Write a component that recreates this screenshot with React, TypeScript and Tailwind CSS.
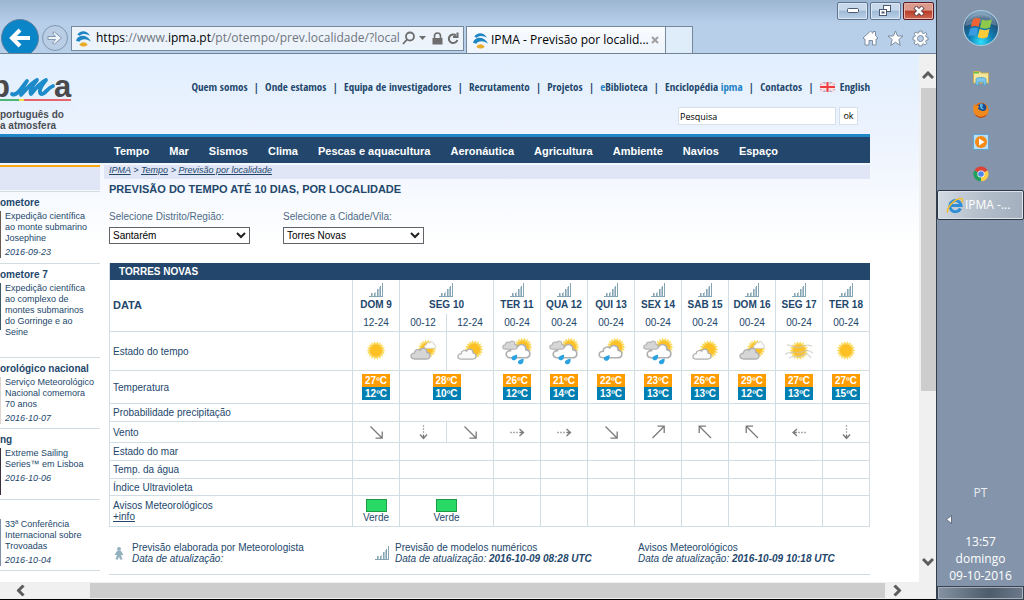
import React from 'react';

const spikes = (cx: number, cy: number, r: number) => {
  const pts: string[] = [];
  for (let i = 0; i < 36; i++) {
    const a = (i * Math.PI) / 18;
    const rad = i % 2 ? r * 0.76 : r;
    pts.push(`${(cx + Math.cos(a) * rad).toFixed(2)},${(cy + Math.sin(a) * rad).toFixed(2)}`);
  }
  return pts.join(' ');
};

function Sun({ cx, cy, r = 9.5 }: { cx: number; cy: number; r?: number }) {
  return (
    <g>
      <polygon points={spikes(cx, cy, r)} fill="#fadb62" />
      <circle cx={cx} cy={cy} r={r * 0.6} fill="#fec124" stroke="#f7b52a" strokeWidth="0.6" />
    </g>
  );
}

function Cloud({ x, y, w, h, fill, stroke = '#b0b0b0' }: { x: number; y: number; w: number; h: number; fill: string; stroke?: string }) {
  return (
    <svg x={x} y={y} width={w} height={h} viewBox="0 0 20 13" preserveAspectRatio="none">
      <path
        d="M4.5 12 C-0.2 12 -0.2 6.2 4.2 6.2 C4 2.8 8 1.8 9.4 3.4 C11.8 -0.4 16.6 1.4 16 5.4 C20.4 6.2 20 12 15.6 12 Z"
        fill={fill}
        stroke={stroke}
        strokeWidth="1.3"
      />
    </svg>
  );
}

function Drop({ x, y }: { x: number; y: number }) {
  return <path d={`M${x + 3} ${y - 3} C${x + 4} ${y + 3} ${x - 1} ${y + 4} ${x - 2.4} ${y + 1.6} C${x - 3.4} ${y - 1} ${x} ${y - 2} ${x + 3} ${y - 3} Z`} fill="#2aa2e0" />;
}

type Sky = 'sun' | 'graycloud' | 'cloud' | 'rain' | 'shower' | 'haze';

function SkyIcon({ kind }: { kind: Sky }) {
  return (
    <svg width="46" height="38" viewBox="0 0 46 38" className="mx-auto block" aria-hidden="true">
      {kind === 'sun' && <Sun cx={23} cy={18.5} />}
      {kind === 'haze' && (
        <g>
          <Sun cx={23} cy={18.5} />
          <path
            d="M11 13C16 13 19 17 25 15S32 13 36 14M9 22C16 18 21 22 26 20S33 18 37 21M13 26C17 23 22 26 27 23S33 24 35 26"
            fill="none"
            stroke="#c4c4be"
            strokeOpacity="0.6"
            strokeWidth="1.5"
          />
        </g>
      )}
      {kind === 'graycloud' && (
        <g>
          <Sun cx={27} cy={17} />
          <Cloud x={10} y={15} w={21} h={13} fill="#d6d6d6" />
          <Cloud x={24} y={9} w={12} h={8} fill="#ffffff" stroke="#c4c4c4" />
        </g>
      )}
      {kind === 'cloud' && (
        <g>
          <Sun cx={27} cy={17.5} />
          <Cloud x={10} y={16} w={20} h={12} fill="#fafafa" />
        </g>
      )}
      {kind === 'rain' && (
        <g>
          <Sun cx={29} cy={15} />
          <Cloud x={11} y={11} w={26} h={16} fill="#ffffff" />
          <Cloud x={8} y={8} w={16} h={10} fill="#d6d6d6" />
          <Drop x={20} y={25.5} />
          <Drop x={26.5} y={29.5} />
        </g>
      )}
      {kind === 'shower' && (
        <g>
          <Sun cx={28} cy={15} />
          <Cloud x={10} y={12} w={25} h={15} fill="#ffffff" />
          <Drop x={18.500} y={26} />
        </g>
      )}
    </svg>
  );
}

function SignalIcon() {
  return (
    <svg width="15" height="14" viewBox="0 0 15 14" className="mx-auto block" aria-hidden="true" shapeRendering="crispEdges">
      <path d="M0 13h14v1H0z M2 10h1v3H2z M5 10h1v3H5z M8 6h1v7H8z M11 3h1v10h-1z M13 0h1v13h-1z" fill="#86a5b4" />
      <path d="M3 10h1v3H3z M6 9h1v4H6z M9 6h1v7H9z M10 4h1v9h-1z" fill="#b9ccd5" />
    </svg>
  );
}

const windPaths: Record<string, React.ReactNode> = {
  se: <path d="M1.500 1.500L13 13M13.200 6.500V13.200H6.500" />,
  ne: <path d="M1.500 13L13 1.500M13.200 8V1.200H6.500" />,
  nw: <path d="M13 13L1.500 1.500M1.200 8V1.200H8" />,
  e: (
    <g>
      <path d="M0 7.500H10" strokeDasharray="2 1" strokeOpacity="0.6" />
      <path d="M9.500 4L13.500 7.500L9.500 11M10 7.500H13" />
    </g>
  ),
  w: (
    <g>
      <path d="M14 7.500H4" strokeDasharray="2 1" strokeOpacity="0.6" />
      <path d="M5 4L1 7.500L5 11M4.500 7.500H1.500" />
    </g>
  ),
  s: (
    <g>
      <path d="M7.500 0V10" strokeDasharray="2 1" strokeOpacity="0.6" />
      <path d="M4 9.500L7.500 13.500L11 9.500M7.500 10V13" />
    </g>
  ),
};

function Wind({ dir }: { dir: string }) {
  return (
    <svg width="15" height="15" viewBox="0 0 15 15" fill="none" stroke="#7a7a7a" strokeWidth="1.300" className="mx-auto block" aria-label={dir}>
      {windPaths[dir]}
    </svg>
  );
}

function IpmaIcon() {
  return (
    <svg width="17" height="17" viewBox="0 0 18 18" className="shrink-0" aria-hidden="true">
      <path d="M2.500 5C5 0.500 12 -0.500 16 6C12 4 8 3 5 6Z" fill="#1f86c4" />
      <path d="M1 11.500C3 4.500 13 4 17 12.500C13 9.500 8 8.500 4.500 12.500Z" fill="#1f86c4" />
      <path d="M4.500 15.500C7 12 11 12 13.500 15.500C11 18 7 18 4.500 15.500Z" fill="#e9ab2c" />
    </svg>
  );
}

const days: { name: string; span: number; hours: string[]; sky: Sky[]; max: number; min: number; wind: string[]; green?: boolean }[] = [
  { name: 'DOM 9', span: 1, hours: ['12-24'], sky: ['sun'], max: 27, min: 12, wind: ['se'], green: true },
  { name: 'SEG 10', span: 2, hours: ['00-12', '12-24'], sky: ['graycloud', 'cloud'], max: 28, min: 10, wind: ['s', 'se'], green: true },
  { name: 'TER 11', span: 1, hours: ['00-24'], sky: ['rain'], max: 26, min: 12, wind: ['e'] },
  { name: 'QUA 12', span: 1, hours: ['00-24'], sky: ['rain'], max: 21, min: 14, wind: ['e'] },
  { name: 'QUI 13', span: 1, hours: ['00-24'], sky: ['shower'], max: 22, min: 13, wind: ['se'] },
  { name: 'SEX 14', span: 1, hours: ['00-24'], sky: ['rain'], max: 23, min: 13, wind: ['ne'] },
  { name: 'SAB 15', span: 1, hours: ['00-24'], sky: ['cloud'], max: 26, min: 13, wind: ['nw'] },
  { name: 'DOM 16', span: 1, hours: ['00-24'], sky: ['graycloud'], max: 29, min: 12, wind: ['nw'] },
  { name: 'SEG 17', span: 1, hours: ['00-24'], sky: ['haze'], max: 27, min: 13, wind: ['w'] },
  { name: 'TER 18', span: 1, hours: ['00-24'], sky: ['sun'], max: 27, min: 15, wind: ['s'] },
];

const cell = 'border-r border-b border-[#d1dce3] p-0 text-center';
const label = 'border-r border-b border-[#d1dce3] p-0 pl-[3px] text-left font-normal';

function EmptyRow({ title, height }: { title: string; height: string }) {
  return (
    <tr className={height}>
      <th scope="row" className={label}>{title}</th>
      {days.map((d) => (
        <td key={d.name} colSpan={d.span} className={cell}></td>
      ))}
    </tr>
  );
}

function ForecastTable() {
  return (
    <table className="mt-[19px] w-full table-fixed border-separate border-spacing-0 border-l border-[#d1dce3] text-[10px] leading-[11px]">
      <colgroup>
        <col className="w-[243px]" />
        {Array.from({ length: 11 }, (_, i) => (
          <col key={i} />
        ))}
      </colgroup>
      <thead>
        <tr className="h-[17px] bg-[#23476c] text-white">
          <th colSpan={12} className="p-0 pl-[9px] text-left">TORRES NOVAS</th>
        </tr>
        <tr className="h-[34px]">
          <th rowSpan={2} className="border-r border-b border-[#d1dce3] p-0 pl-[3px] text-left text-[11px]">DATA</th>
          {days.map((d) => (
            <th key={d.name} colSpan={d.span} className="border-r border-[#d1dce3] p-0 pt-[3px] text-center align-top">
              <SignalIcon />
              <span className="mt-[2px] block whitespace-nowrap">{d.name}</span>
            </th>
          ))}
        </tr>
        <tr className="h-[18px]">
          {days.flatMap((d) => d.hours.map((h) => <td key={d.name + h} className={cell}>{h}</td>))}
        </tr>
      </thead>
      <tbody>
        <tr className="h-[39px]">
          <th scope="row" className={label}>Estado do tempo</th>
          {days.flatMap((d) => d.sky.map((s, i) => <td key={d.name + i} className={cell}><SkyIcon kind={s} /></td>))}
        </tr>
        <tr className="h-[33px]">
          <th scope="row" className={label}>Temperatura</th>
          {days.map((d) => (
            <td key={d.name} colSpan={d.span} className={cell}>
              <div className="mx-auto w-7 font-bold leading-[13px] text-white">
                <div className="bg-[#ff9c00]">{d.max}ºC</div>
                <div className="bg-[#007fb2]">{d.min}ºC</div>
              </div>
            </td>
          ))}
        </tr>
        <EmptyRow title="Probabilidade precipitação" height="h-[18px]" />
        <tr className="h-[21px]">
          <th scope="row" className={label}>Vento</th>
          {days.flatMap((d) => d.wind.map((w, i) => <td key={d.name + i} className={cell}><Wind dir={w} /></td>))}
        </tr>
        <EmptyRow title="Estado do mar" height="h-[18px]" />
        <EmptyRow title="Temp. da água" height="h-[18px]" />
        <EmptyRow title="Índice Ultravioleta" height="h-[17px]" />
        <tr className="h-[31px]">
          <th scope="row" className={label}>
            Avisos Meteorológicos
            <a href="#info" className="block underline">+info</a>
          </th>
          {days.map((d) => (
            <td key={d.name} colSpan={d.span} className={cell}>
              {d.green && (
                <div>
                  <div className="mx-auto h-[13px] w-[21px] border border-[#1d9a45] bg-[#29d965]"></div>
                  <div>Verde</div>
                </div>
              )}
            </td>
          ))}
        </tr>
      </tbody>
    </table>
  );
}

const news = [
  { title: 'ometore', body: 'Expedição científica ao monte submarino Josephine', date: '2016-09-23', height: 'min-h-[72px]', thumb: 'bg-[#6b5a50]' },
  { title: 'ometore 7', body: 'Expedição científica ao complexo de montes submarinos do Gorringe e ao Seine', date: '', height: 'min-h-[94px]', thumb: 'bg-[#3c5a62]' },
  { title: 'orológico nacional', body: 'Serviço Meteorológico Nacional comemora 70 anos', date: '2016-10-07', height: 'min-h-[71px]', thumb: 'bg-[#e0d6d0]' },
  { title: 'ng', body: 'Extreme Sailing Series™ em Lisboa', date: '2016-10-06', height: 'min-h-[71px]', thumb: 'bg-[#3a2f3c]' },
  { title: '', body: '33ª Conferência Internacional sobre Trovoadas', date: '2016-10-04', height: 'min-h-[71px]', thumb: 'bg-[#7f8fa8]' },
];

function Sidebar() {
  return (
    <aside className="mt-[2px] w-[100px] shrink-0 text-[9px] leading-[11px]">
      <div className="h-[25px] border-t-2 border-[#f7a813] bg-[#e0e6f6]"></div>
      <div className="border-b border-[#d1dce3] pt-px"></div>
      {news.map((n) => (
        <article key={n.date + n.title} className={`${n.height} border-b border-[#d1dce3] pt-1`}>
          <h2 className="h-[15px] whitespace-nowrap text-[10px] font-bold leading-[14px]">{n.title}</h2>
          <div className="flex gap-1">
            <div className={`h-[47px] w-px shrink-0 ${n.thumb}`}></div>
            <div className="max-w-[90px]">
              <p>{n.body}</p>
              <p className="mt-[3px] italic">{n.date}</p>
            </div>
          </div>
        </article>
      ))}
    </aside>
  );
}

function Logo() {
  return (
    <a href="#home" aria-label="ipma" className="block w-[74px] shrink-0 font-bold text-[#4b4f55]">
      <svg width="74" height="32" viewBox="0 0 74 32" className="block overflow-visible">
        <text x="-9" y="20" fontFamily="Liberation Sans" fontWeight="700" fontSize="31" fill="#4a4a4c">p</text>
        <path d="M0 22h74v10H0z" fill="#e7f1fe" />
        <path d="M12 17C17 20 21 11 27 4C23 10 20 15 21 18C25 14 30 7 37 3C32 9 29 14 31 17C35 12 40 6 46 3C41 9 38 15 41 17C45 18 47 11 53 9" fill="none" stroke="#1d8bc9" strokeWidth="3.800" strokeLinejoin="round" strokeLinecap="round" />
        <text x="54" y="20" fontFamily="Liberation Sans" fontWeight="700" fontSize="31" fill="#4a4a4c">a</text>
        <path d="M0 22h19v2H0z" fill="#4db57a" />
        <path d="M19 22h5v2h-5z" fill="#f0e04a" />
        <path d="M24 22h47v2H24z" fill="#e8656c" />
      </svg>
      <span className="block whitespace-nowrap text-[10px] leading-[11px]">português do</span>
      <span className="block whitespace-nowrap text-[10px] leading-[11px]">a atmosfera</span>
    </a>
  );
}

const topLinks: React.ReactNode[] = [
  'Quem somos', 'Onde estamos', 'Equipa de investigadores', 'Recrutamento', 'Projetos',
  <><span className="text-[#1b80c4]">e</span>Biblioteca</>,
  <>Enciclopédia <span className="text-[#1b80c4]">ipma</span></>,
  'Contactos',
];

const menu = ['Tempo', 'Mar', 'Sismos', 'Clima', 'Pescas e aquacultura', 'Aeronáutica', 'Agricultura', 'Ambiente', 'Navios', 'Espaço'];

function SelectField({ id, title, value }: { id: string; title: string; value: string }) {
  return (
    <div className="w-[141px]">
      <label htmlFor={id} className="block whitespace-nowrap text-[10px] leading-[13px] text-[#4f6a85]">{title}</label>
      <div className="relative mt-1">
        <select id={id} className="block h-[17px] w-full appearance-none border border-[#606468] bg-white pl-[3px] text-[10px] leading-[13px] text-black">
          <option>{value}</option>
        </select>
        <svg width="10" height="7" viewBox="0 0 10 7" className="pointer-events-none absolute right-1 top-[5px]" fill="none" stroke="#222" strokeWidth="2">
          <path d="M1 1L5 5L9 1" />
        </svg>
      </div>
    </div>
  );
}

function WebPage() {
  return (
    <div className="min-w-0 flex-1 bg-[linear-gradient(#e2effe,#ecf3fe_80px,#ffffff_190px)] bg-white pr-[49px] font-['Liberation_Sans',Arial,sans-serif] text-[#23476c]">
      <header className="flex h-[80px] justify-between">
        <div className="pt-[23px]"><Logo /></div>
        <div className="flex flex-col items-end pt-[25px]">
          <nav className="flex items-center whitespace-nowrap font-['Open_Sans_Condensed','Noto_Sans_Condensed','Liberation_Sans_Narrow','Liberation_Sans',sans-serif] text-[11px] font-bold leading-4">
            {topLinks.map((l, i) => (
              <React.Fragment key={i}>
                <a href="#top">{l}</a>
                <span className="mx-[6px]">|</span>
              </React.Fragment>
            ))}
            <a href="#en" className="flex items-center gap-[5px]">
              <svg width="15" height="10" viewBox="0 0 15 10" aria-hidden="true">
                <rect width="15" height="10" fill="#a3acd0" />
                <path d="M0 0L15 10M15 0L0 10" stroke="#fbdcdc" strokeWidth="2.500" />
                <path d="M7.500 0V10M0 5H15" stroke="#fbe3e3" strokeWidth="4" />
                <path d="M7.500 0V10M0 5H15" stroke="#ee3d40" strokeWidth="2" />
              </svg>
              English
            </a>
          </nav>
          <form className="mr-3 mt-3 flex gap-[3px] font-['Open_Sans','Noto_Sans',sans-serif] text-[9px] text-black" onSubmit={(e) => e.preventDefault()}>
            <input aria-label="Pesquisa" defaultValue="Pesquisa" className="h-[18px] w-[158px] border border-[#d5e0ea] bg-white px-px" />
            <button type="submit" className="h-[18px] w-[19px] border border-[#d5e0ea] bg-white">ok</button>
          </form>
        </div>
      </header>
      <nav className="flex h-[29px] items-center gap-5 whitespace-nowrap border-t-[3px] border-[#1f86c8] bg-[#23476c] pl-[114px] pt-px text-[11px] font-bold leading-[14px] text-white">
        {menu.map((m) => <a key={m} href="#menu">{m}</a>)}
      </nav>
      <div className="flex gap-1">
        <Sidebar />
        <main className="min-w-0 flex-1 pt-[2px]">
          <p className="h-[14px] bg-[#e0e6f6] pl-[5px] text-[9px] italic leading-[11px]">
            <a href="#ipma" className="underline">IPMA</a> &gt; <a href="#tempo" className="underline">Tempo</a> &gt; <a href="#prev" className="underline">Previsão por localidade</a>
          </p>
          <div className="pl-[5px]">
            <h1 className="mt-[3px] text-[11px] font-bold leading-[14px]">PREVISÃO DO TEMPO ATÉ 10 DIAS, POR LOCALIDADE</h1>
            <div className="mt-[14px] flex gap-[33px]">
              <SelectField id="distrito" title="Selecione Distrito/Região:" value="Santarém" />
              <SelectField id="cidade" title="Selecione a Cidade/Vila:" value="Torres Novas" />
            </div>
            <ForecastTable />
            <div className="mt-[15px] flex border-b border-[#d1dce3] pb-[10px] text-[10px] leading-[11px]">
              <div className="flex w-[263px] items-center gap-2 pl-[5px]">
                <svg width="10" height="13" viewBox="0 0 10 13" fill="#93b0bd" aria-hidden="true">
                  <circle cx="5" cy="2" r="2" />
                  <path d="M3 4H7L9.500 8H7L8.500 12.500H6L5 9.500L4 12.500H1.500L3 8H0.500Z" />
                </svg>
                <p>Previsão elaborada por Meteorologista<br /><i>Data de atualização:</i></p>
              </div>
              <div className="flex w-[266px] items-center gap-[5px] pl-[3px]">
                <div><SignalIcon /></div>
                <p>Previsão de modelos numéricos<br /><i>Data de atualização: <b>2016-10-09 08:28 UTC</b></i></p>
              </div>
              <p>Avisos Meteorológicos<br /><i>Data de atualização: <b>2016-10-09 10:18 UTC</b></i></p>
            </div>
          </div>
        </main>
      </div>
    </div>
  );
}

function Chevron({ className }: { className: string }) {
  return (
    <svg width="12" height="9" viewBox="0 0 12 9" fill="none" stroke="#5c5c5c" strokeWidth="3" className={className}>
      <path d="M1 7L6 2L11 7" />
    </svg>
  );
}

function Chrome() {
  const winBtn = 'flex h-[18px] w-[31px] items-center justify-center rounded-[2px] border border-[#5d7390] bg-[linear-gradient(#c7d8ea_45%,#9fb9d5_50%,#bcd2ea)] shadow-[inset_0_0_0_1px_#dbe7f3]';
  return (
    <header className="h-[54px] overflow-hidden border-b border-[#6f8297] bg-[linear-gradient(#9cb5d1,#b8cfea_24px,#b8cfea)] text-[12px] font-['Open_Sans','Noto_Sans',sans-serif]">
      <div className="flex h-[23px] justify-end gap-[2px] pr-[2px] pt-[2px]">
        <button type="button" aria-label="Minimizar" className={winBtn}>
          <svg width="12" height="6" viewBox="0 0 12 6"><rect x="0.500" y="0.500" width="11" height="4" rx="1" fill="#fff" stroke="#4b5a70" /></svg>
        </button>
        <button type="button" aria-label="Restaurar" className={winBtn}>
          <svg width="13" height="12" viewBox="0 0 13 12" fill="#fff" stroke="#4b5a70"><rect x="4.500" y="0.500" width="7" height="6" /><rect x="0.500" y="4.500" width="7" height="6" /><rect x="3" y="7" width="2" height="1" /></svg>
        </button>
        <button type="button" aria-label="Fechar" className="flex h-[18px] w-[31px] items-center justify-center rounded-[2px] border border-[#5b1b22] bg-[linear-gradient(#dc9a8c_45%,#b93a26_50%,#cf6a55)] shadow-[inset_0_0_0_1px_#e9b3a8]">
          <svg width="12" height="10" viewBox="0 0 12 10"><path d="M2 1L10 9M10 1L2 9" stroke="#5b4048" strokeWidth="4.500" /><path d="M2.500 1.500L9.500 8.500M9.500 1.500L2.500 8.500" stroke="#fff" strokeWidth="2.600" /></svg>
        </button>
      </div>
      <div className="flex h-[30px] items-center">
        <button type="button" aria-label="Retroceder" className="ml-px flex h-[38px] w-[38px] shrink-0 items-center justify-center rounded-full border border-[#5f7f9f] bg-[#0a86c8]">
          <svg width="22" height="20" viewBox="0 0 22 20" fill="none" stroke="#fff" strokeWidth="4"><path d="M3 10H21M11 2L3 10L11 18" /></svg>
        </button>
        <button type="button" aria-label="Avançar" className="ml-[3px] flex h-[26px] w-[26px] shrink-0 items-center justify-center rounded-full border border-[#8197b0] bg-[#b9cde4]">
          <svg width="16" height="14" viewBox="0 0 16 14" fill="#eef4fa" stroke="#8197b0"><path d="M1 5.500H8.500L5.500 2L7.500 1L14.500 7L7.500 13L5.500 12L8.500 8.500H1Z" /></svg>
        </button>
        <div className="ml-[3px] flex h-[25px] w-[393px] shrink-0 items-center border border-[#75889c] bg-[#edf3fb] pl-[3px] pr-1">
          <IpmaIcon />
          <div className="ml-1 min-w-0 flex-1 whitespace-nowrap text-[#6f757b]">
            <span className="text-black">https</span>://www.<span className="text-black">ipma.pt</span>/pt/otempo/prev.localidade/?local
          </div>
          <svg width="13" height="14" viewBox="0 0 13 14" fill="none" stroke="#6d6d6d" strokeWidth="1.800" className="shrink-0"><circle cx="8" cy="5.500" r="4" /><path d="M5 8.500L1 13" /></svg>
          <svg width="7" height="4" viewBox="0 0 7 4" className="ml-1 shrink-0"><path d="M0 0H7L3.500 4Z" fill="#6d6d6d" /></svg>
          <svg width="11" height="13" viewBox="0 0 11 13" className="ml-[6px] shrink-0"><path d="M0.500 6H10.500V12.500H0.500Z" fill="#6d6d6d" /><path d="M2.500 6V4A3 3 0 0 1 8.500 4V6" fill="none" stroke="#6d6d6d" strokeWidth="1.600" /></svg>
          <svg width="12" height="13" viewBox="0 0 12 13" className="ml-1 shrink-0" fill="none" stroke="#6d6d6d" strokeWidth="2"><path d="M9 3.500A4.300 4.300 0 1 0 10.300 8" /><path d="M6 5H10.500V0.500" /></svg>
        </div>
        <div className="ml-[2px] flex h-[27px] w-[200px] shrink-0 items-center self-end border border-b-0 border-[#75889c] bg-[linear-gradient(#f9fcff,#eef4fc)] pl-[5px] text-black">
          <IpmaIcon />
          <span className="ml-[2px] whitespace-nowrap">IPMA - Previsão por localid...</span>
          <button type="button" aria-label="Fechar separador" className="ml-auto mr-[6px]">
            <svg width="8" height="8" viewBox="0 0 8 8"><path d="M1 1L7 7M7 1L1 7" stroke="#a0a0a0" strokeWidth="2" /></svg>
          </button>
        </div>
        <button type="button" aria-label="Novo separador" className="h-[27px] w-[27px] shrink-0 self-end border border-b-0 border-l-0 border-[#75889c] bg-[#dfecf9]"></button>
        <div className="ml-auto mr-[7px] flex items-center gap-2">
          <svg width="17" height="16" viewBox="0 0 17 16" fill="#fff" stroke="#7d8da0"><path d="M1 8L8.500 1L11 3.300V1.500H13.500V5.700L16 8L15 9H14V15H10.500V10.500H7V15H3V9H2Z" /></svg>
          <svg width="17" height="17" viewBox="0 0 17 17" fill="#fff" stroke="#7d8da0"><path d="M8.500 1L10.600 6H16L11.800 9.500L13.300 15.500L8.500 12.200L3.700 15.500L5.200 9.500L1 6H6.400Z" /></svg>
          <svg width="17" height="17" viewBox="0 0 17 17" fill="#fff" stroke="#7d8da0"><path d="M7 1H10L10.300 3L11.800 3.600L13.500 2.400L15 4L13.700 5.600L14.200 7L16 7.200V10L14.200 10.300L13.600 11.700L14.800 13.400L13 15L11.500 13.800L10.200 14.300L10 16H7L6.800 14.300L5.400 13.700L3.700 15L2 13L3.200 11.500L2.700 10.200L1 10V7L2.800 6.700L3.300 5.400L2 3.700L4 2L5.500 3.200L6.800 2.700Z" /><circle cx="8.500" cy="8.500" r="3" fill="#b8cfea" /></svg>
        </div>
      </div>
    </header>
  );
}

function Taskbar() {
  return (
    <aside className="flex w-[87px] shrink-0 flex-col items-center bg-[#8495ab] font-['Open_Sans','Noto_Sans',sans-serif] text-[12px] text-white">
      <button type="button" aria-label="Iniciar" className="mt-[9px]">
        <svg width="38" height="38" viewBox="0 0 38 38" className="block">
          <defs>
            <radialGradient id="orb" cx="0.5" cy="0.9" r="0.85">
              <stop offset="0" stopColor="#2fe0fb" />
              <stop offset="0.4" stopColor="#0f7fb5" />
              <stop offset="0.8" stopColor="#20496f" />
              <stop offset="1" stopColor="#7fa3bf" />
            </radialGradient>
          </defs>
          <circle cx="19" cy="19" r="17.500" fill="url(#orb)" stroke="#a9c6da" strokeWidth="1.200" />
          <path d="M3 17C5 0 33 0 35 17C25 13 13 14 3 17Z" fill="#fff" fillOpacity="0.25" />
          <path d="M11 10.500C13 8.500 16 8.500 18.500 10L16.500 18C14 16.500 11 16.500 8.700 18Z" fill="#ee6331" />
          <path d="M20 10.500C23 12 26.500 12 30 10.200L28 18.500C25 20 21.500 20 18 18.500Z" fill="#8fc94b" />
          <path d="M8.300 19.500C11 18 13.500 18 16.200 19.500L14.200 27.500C11.500 26 8.500 26 6.300 27.500Z" fill="#3a9be0" />
          <path d="M17.700 20C21 21.500 24.500 21.500 27.600 20L25.600 28C22 30 18.500 29.500 15.700 28Z" fill="#fbcb3a" />
        </svg>
      </button>
      <div className="mt-[23px] flex flex-col items-center gap-4">
        <svg width="16" height="16" viewBox="0 0 16 16">
          <path d="M0.500 1.500H7L8 3H15.500V13H0.500Z" fill="#f6e69a" stroke="#c9ae52" />
          <path d="M1 2H6V3.500H1Z" fill="#63c142" />
          <path d="M3 15V9C3 7 13 7 13 9V15H10.500V12H5.500V15Z" fill="#7cc8ec" stroke="#4a9cc9" strokeWidth="0.700" />
        </svg>
        <svg width="16" height="16" viewBox="0 0 16 16">
          <circle cx="8" cy="8" r="7.500" fill="#e2701a" />
          <circle cx="9" cy="6.500" r="5" fill="#1c4f98" />
          <path d="M7 2C9 1 11 3 9 5.500L11 7C9 8 8 7 7 5Z" fill="#57b5e0" />
          <path d="M1 2C3 4 4 4 6 4L5 7C7 8 9 9.500 11 9C14 8 14 4 12.500 2C16 5 16.500 11 13 14C9 17 3 16 1 11C0 8 0 5 1 2Z" fill="#f08a1d" />
          <path d="M2 12C6 16 11 15.500 14 12C12 17 4 17 2 12Z" fill="#a7321b" />
        </svg>
        <svg width="16" height="16" viewBox="0 0 16 16">
          <rect x="0.500" y="0.500" width="15" height="15" fill="#b9ddf3" stroke="#5da6d6" />
          <circle cx="8" cy="8" r="6" fill="#f58a14" />
          <path d="M6 4.500L11.500 8L6 11.500Z" fill="#fff" />
        </svg>
        <svg width="16" height="16" viewBox="0 0 16 16">
          <path d="M8 8L1.500 4.300A7.300 7.300 0 0 1 14.500 4.500Z" fill="#dc4437" />
          <path d="M8 8L8.500 15.300A7.300 7.300 0 0 1 1.300 4.600Z" fill="#22a05c" />
          <path d="M8 8L14.500 4.400A7.300 7.300 0 0 1 8 15.300Z" fill="#fdcd45" />
          <circle cx="8" cy="8" r="3.600" fill="#f2f2f2" />
          <circle cx="8" cy="8" r="2.800" fill="#4a86ee" />
        </svg>
      </div>
      <button type="button" className="mt-2 flex h-[30px] w-full items-center rounded-[2px] border border-[#2e3844] bg-[linear-gradient(100deg,#d3dae2,#b4bfcb_50%,#a2aebd)] pl-2 shadow-[inset_0_0_0_1px_#dde3ea]">
        <svg width="18" height="17" viewBox="0 0 18 17" className="shrink-0">
          <path d="M14.500 11.500A5.600 5.600 0 1 1 15 8.500H5" fill="none" stroke="#2f8fd6" strokeWidth="3" />
          <path d="M2 15.500C-1 13 8 1 15.500 1.500C17 2 16.500 4 15.500 5.500" fill="none" stroke="#f3bb2d" strokeWidth="1.600" />
        </svg>
        <span className="ml-px whitespace-nowrap">IPMA -...</span>
      </button>
      <div className="mt-auto flex w-full flex-col items-center pb-[2px] leading-[17px]">
        <span className="text-[#e8ecf1]">PT</span>
        <svg width="6" height="9" viewBox="0 0 6 9" className="mb-[9px] mt-[14px] ml-[9px] mr-auto"><path d="M5.500 0.500V8.500L0.500 4.500Z" fill="#fff" stroke="#4f5d70" strokeWidth="0.800" /></svg>
        <time className="flex flex-col items-center">
          <span>13:57</span>
          <span>domingo</span>
          <span>09-10-2016</span>
        </time>
      </div>
      <button type="button" aria-label="Mostrar ambiente de trabalho" className="h-[14px] w-full border border-[#39434f] bg-[linear-gradient(100deg,#8593a3,#4e5b6b_60%,#6c7a8b)] shadow-[inset_0_0_0_1px_#a3afbc]"></button>
    </aside>
  );
}

export default function App() {
  return (
    <div className="flex min-h-screen bg-[#f0f0f0]">
      <div className="flex min-w-0 flex-1 flex-col border-r border-[#333f4d]">
        <Chrome />
        <div className="flex flex-1">
          <WebPage />
          <div className="flex w-[17px] shrink-0 flex-col items-center bg-[#f0f0f0] pl-px">
            <div className="flex h-[34px] shrink-0 items-end pb-2"><Chevron className="block" /></div>
            <div className="h-[303px] w-[15px] bg-[#cdcdcd]"></div>
            <Chevron className="mb-4 mt-auto block rotate-180" />
          </div>
        </div>
        <div className="flex h-[18px] items-center border-b border-black bg-[#f0f0f0] pr-[31px]">
          <div className="flex w-[90px] shrink-0 pl-[15px]"><Chevron className="block -rotate-90" /></div>
          <div className="h-[15px] flex-1 bg-[#cdcdcd]"></div>
          <div className="ml-[6px] w-[14px]"><Chevron className="block rotate-90" /></div>
        </div>
      </div>
      <Taskbar />
    </div>
  );
}
